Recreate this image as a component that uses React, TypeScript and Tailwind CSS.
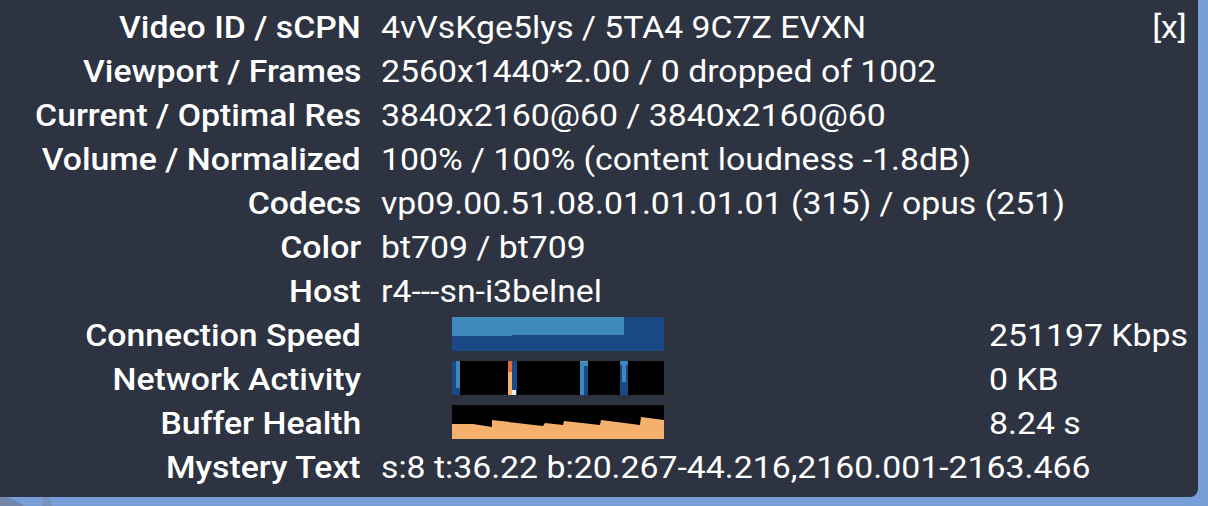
import React from "react";

const font = { fontFamily: "Roboto, 'Liberation Sans', sans-serif" };

function SpeedGraph() {
  return (
    <svg width="212" height="34" viewBox="0 0 212 34" className="block">
      <rect x="0" y="0" width="212" height="34" fill="#1a4884" />
      <polygon points="0,0 172,0 172,18 60,18 60,19 0,19" fill="#4089bd" />
    </svg>
  );
}

function NetGraph() {
  return (
    <svg width="212" height="34" viewBox="0 0 212 34" className="block">
      <rect x="0" y="0" width="212" height="34" fill="#000" />
      <rect x="0" y="0" width="8" height="34" fill="#1a4a86" />
      <rect x="4" y="0" width="4" height="27" fill="#3f88bd" />
      <rect x="56" y="0" width="9" height="34" fill="#1a4a86" />
      <rect x="56" y="0" width="4" height="11" fill="#e0683e" />
      <rect x="56" y="11" width="4" height="23" fill="#f6b16e" />
      <rect x="60" y="29" width="4" height="5" fill="#f4efe8" />
      <rect x="128" y="0" width="8" height="34" fill="#1a4a86" />
      <rect x="128" y="0" width="8" height="5" fill="#3f88bd" />
      <rect x="128" y="0" width="4" height="34" fill="#3f88bd" />
      <rect x="129" y="0" width="6" height="1" fill="#6fb59a" />
      <rect x="168" y="0" width="8" height="34" fill="#1a4a86" />
      <rect x="168" y="0" width="8" height="4" fill="#3f88bd" />
      <rect x="170" y="0" width="4" height="21" fill="#3f88bd" />
    </svg>
  );
}

function BufferGraph() {
  return (
    <svg width="212" height="34" viewBox="0 0 212 34" className="block">
      <rect x="0" y="0" width="212" height="34" fill="#000" />
      <polygon
        points="0,19 21,19 40,22 40,15 91,21 93,18 111,20 112,16 148,20 149,15 188,20 189,12 212,15 212,34 0,34"
        fill="#f5b06d"
      />
    </svg>
  );
}

type Row = { label: string; value?: string; graph?: React.ReactNode; right?: string };

const rows: Row[] = [
  { label: "Video ID / sCPN", value: "4vVsKge5lys / 5TA4 9C7Z EVXN" },
  { label: "Viewport / Frames", value: "2560x1440*2.00 / 0 dropped of 1002" },
  { label: "Current / Optimal Res", value: "3840x2160@60 / 3840x2160@60" },
  { label: "Volume / Normalized", value: "100% / 100% (content loudness -1.8dB)" },
  { label: "Codecs", value: "vp09.00.51.08.01.01.01.01 (315) / opus (251)" },
  { label: "Color", value: "bt709 / bt709" },
  { label: "Host", value: "r4---sn-i3belnel" },
  { label: "Connection Speed", graph: <SpeedGraph />, right: "251197 Kbps" },
  { label: "Network Activity", graph: <NetGraph />, right: "0 KB" },
  { label: "Buffer Health", graph: <BufferGraph />, right: "8.24 s" },
  { label: "Mystery Text", value: "s:8 t:36.22 b:20.267-44.216,2160.001-2163.466" },
];

export default function App() {
  return (
    <div className="relative w-[1208px] h-[506px] overflow-hidden bg-[#789fd7]" style={font}>
      <svg className="absolute left-0 bottom-0" width="70" height="12" viewBox="0 0 70 12">
        <path d="M0,2 C8,3 16,6 24,12 L0,12 Z" fill="#6d7d97" opacity="0.7" />
        <path d="M44,0 L48,0 L52,12 L42,12 Z" fill="#7688a6" opacity="0.6" />
      </svg>
      <div className="relative w-[1198px] h-[497px] rounded-br-[8px] bg-[#2d3340] pt-[6px] text-white text-[31px]">
        <div className="absolute right-[11px] top-[6px] leading-[44px] font-normal">
          <span className="inline-block origin-right scale-x-[1.09]">[x]</span>
        </div>
        {rows.map((r) => (
          <div key={r.label} className="flex h-[44px] items-center leading-[44px]">
            <div className="w-[361px] shrink-0 text-right font-medium whitespace-nowrap">
              <span className="inline-block origin-right scale-x-[1.09]">{r.label}</span>
            </div>
            {r.graph ? (
              <div className="flex items-center">
                <div className="ml-[91px] mb-[4px] w-[212px] h-[34px]">{r.graph}</div>
                <div className="ml-[325px] whitespace-nowrap">
                  <span className="inline-block origin-left scale-x-[1.09]">{r.right}</span>
                </div>
              </div>
            ) : (
              <div className="ml-[20px] whitespace-nowrap">
                <span className="inline-block origin-left scale-x-[1.09]">{r.value}</span>
              </div>
            )}
          </div>
        ))}
      </div>
    </div>
  );
}
